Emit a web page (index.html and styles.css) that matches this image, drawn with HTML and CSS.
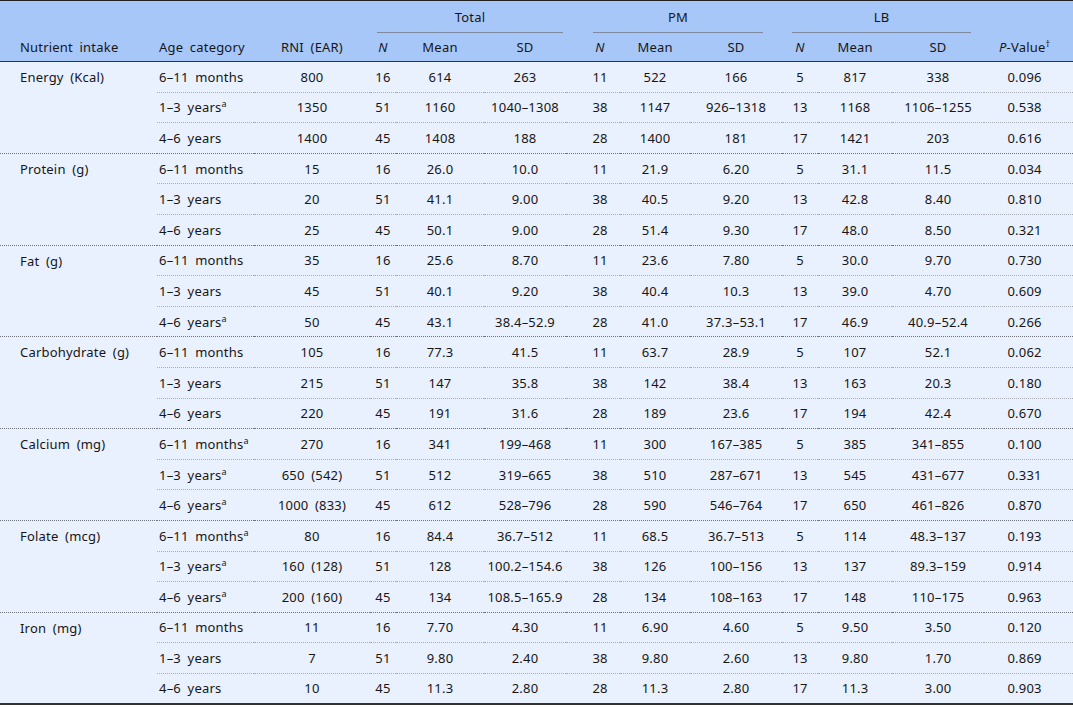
FILE: index.html
```html
<!DOCTYPE html>
<html>
<head>
<meta charset="utf-8">
<link rel="stylesheet" href="styles.css">
</head>
<body>
<table class="tbl">
  <colgroup>
    <col class="c-nut"><col class="c-age"><col class="c-rni">
    <col class="c-tn"><col class="c-tm"><col class="c-tsd">
    <col class="c-pn"><col class="c-pm"><col class="c-psd">
    <col class="c-ln"><col class="c-lm"><col class="c-lsd">
    <col class="c-p">
  </colgroup>
  <thead>
    <tr class="h1">
      <th class="l" rowspan="2">Nutrient intake</th>
      <th class="l age" rowspan="2">Age category</th>
      <th rowspan="2">RNI (EAR)</th>
      <th colspan="3"><div class="grp g-total">Total</div></th>
      <th colspan="3"><div class="grp g-pm">PM</div></th>
      <th colspan="3"><div class="grp g-lb">LB</div></th>
      <th class="pv" rowspan="2"><i>P</i>-Value<sup>†</sup></th>
    </tr>
    <tr class="h2">
      <th><i>N</i></th><th>Mean</th><th>SD</th>
      <th class="gap"><i>N</i></th><th>Mean</th><th>SD</th>
      <th><i>N</i></th><th>Mean</th><th>SD</th>
    </tr>
  </thead>
  <tbody>
    <tr><td class="nut" rowspan="3">Energy (Kcal)</td><td class="age">6–11 months</td><td>800</td><td>16</td><td>614</td><td>263</td><td class="gap">11</td><td>522</td><td>166</td><td>5</td><td>817</td><td>338</td><td class="pv">0.096</td></tr>
    <tr><td class="age">1–3 years<sup>a</sup></td><td>1350</td><td>51</td><td>1160</td><td>1040–1308</td><td class="gap">38</td><td>1147</td><td>926–1318</td><td>13</td><td>1168</td><td>1106–1255</td><td class="pv">0.538</td></tr>
    <tr class="last"><td class="age">4–6 years</td><td>1400</td><td>45</td><td>1408</td><td>188</td><td class="gap">28</td><td>1400</td><td>181</td><td>17</td><td>1421</td><td>203</td><td class="pv">0.616</td></tr>

    <tr><td class="nut" rowspan="3">Protein (g)</td><td class="age">6–11 months</td><td>15</td><td>16</td><td>26.0</td><td>10.0</td><td class="gap">11</td><td>21.9</td><td>6.20</td><td>5</td><td>31.1</td><td>11.5</td><td class="pv">0.034</td></tr>
    <tr><td class="age">1–3 years</td><td>20</td><td>51</td><td>41.1</td><td>9.00</td><td class="gap">38</td><td>40.5</td><td>9.20</td><td>13</td><td>42.8</td><td>8.40</td><td class="pv">0.810</td></tr>
    <tr class="last"><td class="age">4–6 years</td><td>25</td><td>45</td><td>50.1</td><td>9.00</td><td class="gap">28</td><td>51.4</td><td>9.30</td><td>17</td><td>48.0</td><td>8.50</td><td class="pv">0.321</td></tr>

    <tr><td class="nut" rowspan="3">Fat (g)</td><td class="age">6–11 months</td><td>35</td><td>16</td><td>25.6</td><td>8.70</td><td class="gap">11</td><td>23.6</td><td>7.80</td><td>5</td><td>30.0</td><td>9.70</td><td class="pv">0.730</td></tr>
    <tr><td class="age">1–3 years</td><td>45</td><td>51</td><td>40.1</td><td>9.20</td><td class="gap">38</td><td>40.4</td><td>10.3</td><td>13</td><td>39.0</td><td>4.70</td><td class="pv">0.609</td></tr>
    <tr class="last"><td class="age">4–6 years<sup>a</sup></td><td>50</td><td>45</td><td>43.1</td><td>38.4–52.9</td><td class="gap">28</td><td>41.0</td><td>37.3–53.1</td><td>17</td><td>46.9</td><td>40.9–52.4</td><td class="pv">0.266</td></tr>

    <tr><td class="nut" rowspan="3">Carbohydrate (g)</td><td class="age">6–11 months</td><td>105</td><td>16</td><td>77.3</td><td>41.5</td><td class="gap">11</td><td>63.7</td><td>28.9</td><td>5</td><td>107</td><td>52.1</td><td class="pv">0.062</td></tr>
    <tr><td class="age">1–3 years</td><td>215</td><td>51</td><td>147</td><td>35.8</td><td class="gap">38</td><td>142</td><td>38.4</td><td>13</td><td>163</td><td>20.3</td><td class="pv">0.180</td></tr>
    <tr class="last"><td class="age">4–6 years</td><td>220</td><td>45</td><td>191</td><td>31.6</td><td class="gap">28</td><td>189</td><td>23.6</td><td>17</td><td>194</td><td>42.4</td><td class="pv">0.670</td></tr>

    <tr><td class="nut" rowspan="3">Calcium (mg)</td><td class="age">6–11 months<sup>a</sup></td><td>270</td><td>16</td><td>341</td><td>199–468</td><td class="gap">11</td><td>300</td><td>167–385</td><td>5</td><td>385</td><td>341–855</td><td class="pv">0.100</td></tr>
    <tr><td class="age">1–3 years<sup>a</sup></td><td>650 (542)</td><td>51</td><td>512</td><td>319–665</td><td class="gap">38</td><td>510</td><td>287–671</td><td>13</td><td>545</td><td>431–677</td><td class="pv">0.331</td></tr>
    <tr class="last"><td class="age">4–6 years<sup>a</sup></td><td>1000 (833)</td><td>45</td><td>612</td><td>528–796</td><td class="gap">28</td><td>590</td><td>546–764</td><td>17</td><td>650</td><td>461–826</td><td class="pv">0.870</td></tr>

    <tr><td class="nut" rowspan="3">Folate (mcg)</td><td class="age">6–11 months<sup>a</sup></td><td>80</td><td>16</td><td>84.4</td><td>36.7–512</td><td class="gap">11</td><td>68.5</td><td>36.7–513</td><td>5</td><td>114</td><td>48.3–137</td><td class="pv">0.193</td></tr>
    <tr><td class="age">1–3 years<sup>a</sup></td><td>160 (128)</td><td>51</td><td>128</td><td>100.2–154.6</td><td class="gap">38</td><td>126</td><td>100–156</td><td>13</td><td>137</td><td>89.3–159</td><td class="pv">0.914</td></tr>
    <tr class="last"><td class="age">4–6 years<sup>a</sup></td><td>200 (160)</td><td>45</td><td>134</td><td>108.5–165.9</td><td class="gap">28</td><td>134</td><td>108–163</td><td>17</td><td>148</td><td>110–175</td><td class="pv">0.963</td></tr>

    <tr><td class="nut" rowspan="3">Iron (mg)</td><td class="age">6–11 months</td><td>11</td><td>16</td><td>7.70</td><td>4.30</td><td class="gap">11</td><td>6.90</td><td>4.60</td><td>5</td><td>9.50</td><td>3.50</td><td class="pv">0.120</td></tr>
    <tr><td class="age">1–3 years</td><td>7</td><td>51</td><td>9.80</td><td>2.40</td><td class="gap">38</td><td>9.80</td><td>2.60</td><td>13</td><td>9.80</td><td>1.70</td><td class="pv">0.869</td></tr>
    <tr class="end"><td class="age">4–6 years</td><td>10</td><td>45</td><td>11.3</td><td>2.80</td><td class="gap">28</td><td>11.3</td><td>2.80</td><td>17</td><td>11.3</td><td>3.00</td><td class="pv">0.903</td></tr>
  </tbody>
</table>
</body>
</html>
```

FILE: styles.css
```css
html, body {
  margin: 0;
  padding: 0;
  background: #ffffff;
}

.tbl {
  width: 1073px;
  table-layout: fixed;
  border-collapse: collapse;
  font-family: "Noto Sans", "Open Sans", sans-serif;
  font-size: 13px;
  letter-spacing: 0.2px;
  word-spacing: 3px;
  color: #161616;
  border-top: 1px solid #222;
  border-bottom: 2px solid #333;
}

.c-nut { width: 157px; }
.c-age { width: 97px; }
.c-rni { width: 116px; }
.c-tn { width: 26px; }
.c-tm { width: 88px; }
.c-tsd { width: 82px; }
.c-pn { width: 54px; }
.c-pm { width: 70px; }
.c-psd { width: 92px; }
.c-ln { width: 36px; }
.c-lm { width: 74px; }
.c-lsd { width: 92px; }
.c-p { width: 89px; }

th, td {
  padding: 0;
  text-align: center;
  white-space: nowrap;
}

thead {
  background: #a8c7f9;
}

th {
  font-weight: normal;
}

thead .h1 { height: 33px; }
thead .h2 { height: 28px; }
thead .h2 th { border-bottom: 1px solid #333; }
thead th[rowspan] {
  vertical-align: bottom;
  padding-bottom: 5px;
  border-bottom: 1px solid #333;
}

th.l, td.nut {
  text-align: left;
  padding-left: 20px;
}
th.age, td.age {
  text-align: left;
  padding-left: 2px;
}

.grp {
  border-bottom: 1px solid #7f8aa0;
  padding: 7px 0 6px;
}
.g-total { margin: 0 3px 0 7px; }
.g-pm { margin: 0 19px 0 27px; }
.g-lb { margin: 0 13px 0 10px; }

.gap { padding-left: 14px; }
.pv { padding-right: 8px; }

tbody {
  background: #eaf1fe;
}

tbody tr { height: 30.6px; }

tbody td {
  border-bottom: 1px dotted #a9acb3;
}

tbody td.nut {
  vertical-align: top;
  padding-top: 6px;
  border-bottom: 1px dotted #6f7278;
}

tbody tr.last td {
  border-bottom: 1px dotted #6f7278;
}

tbody tr.end td {
  border-bottom: none;
}

tbody tr:last-child td.nut { border-bottom: none; }

sup {
  font-size: 9px;
  line-height: 0;
  vertical-align: 5px;
  letter-spacing: 0;
}
```
